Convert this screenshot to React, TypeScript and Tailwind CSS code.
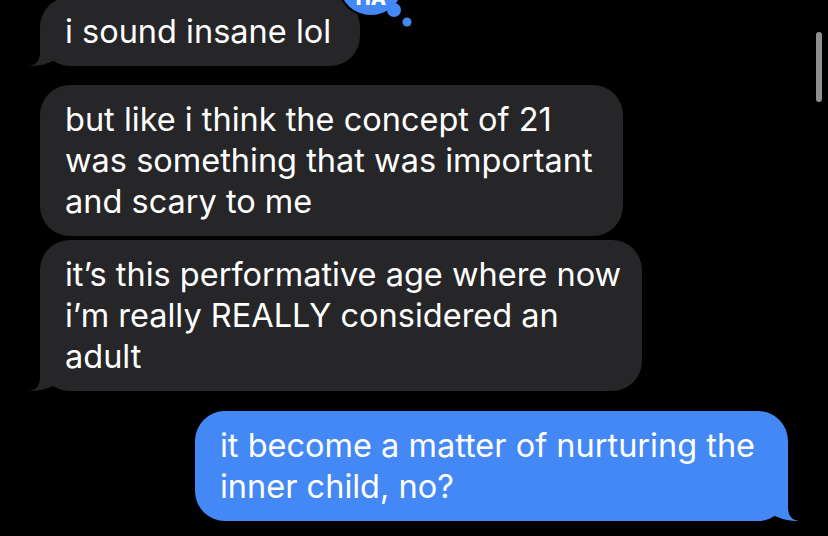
import type { ReactNode } from 'react';

type Side = 'left' | 'right';

function Tail({ side, color }: { side: Side; color: string }) {
  return (
    <svg
      width="44"
      height="34"
      viewBox="0 0 44 34"
      className={side === 'left' ? 'absolute -left-[12px] bottom-0' : 'absolute -right-[12px] bottom-0 -scale-x-100'}
    >
      <path d="M12,4 L12,20 C12,29 8,33 1,34 C10,34 19,32 25,29 L42,4 Z" fill={color} />
    </svg>
  );
}

function Bubble({
  side,
  width,
  tail,
  className,
  children,
}: {
  side: Side;
  width: string;
  tail?: boolean;
  className?: string;
  children: ReactNode;
}) {
  const color = side === 'left' ? '#262628' : '#4388f5';
  return (
    <div
      className={`relative rounded-[30px] py-[14px] pl-[25px] text-[32.5px] leading-[41px] text-white ${width} ${
        side === 'left' ? 'ml-[40px] self-start bg-[#262628]' : 'mr-[40px] self-end bg-[#4388f5]'
      } ${className ?? ''}`}
    >
      {tail && <Tail side={side} color={color} />}
      <p className="relative whitespace-nowrap">{children}</p>
    </div>
  );
}

// the "HA" tapback cloud, only its lower edge shows at the top of the screen
function Tapback() {
  return (
    <svg width="80" height="30" viewBox="0 0 80 30" className="absolute left-[336px] top-0">
      <ellipse cx="35" cy="-14" rx="33" ry="31" fill="#000" />
      <circle cx="58" cy="10" r="9" fill="#000" />
      <ellipse cx="35" cy="-14" rx="31" ry="29" fill="#4388f5" />
      <circle cx="58" cy="10" r="7" fill="#4388f5" />
      <circle cx="71" cy="22" r="4.5" fill="#4388f5" />
      <text x="35" y="5" textAnchor="middle" fill="#fff" fontSize="20" fontWeight="800" fontFamily="Inter, sans-serif">
        HA
      </text>
    </svg>
  );
}

export default function App() {
  return (
    <div className="relative h-[536px] w-[828px] overflow-hidden bg-black font-['Inter',sans-serif]">
      <div className="flex flex-col">
        <Bubble side="left" width="w-[320px]" tail className="-mt-[3px]">
          i sound insane lol
        </Bubble>
        <Bubble side="left" width="w-[583px]" className="mt-[19px]">
          but like i think the concept of 21
          <br />
          was something that was important
          <br />
          and scary to me
        </Bubble>
        <Bubble side="left" width="w-[602px]" tail className="mt-[4px]">
          it’s this performative age where now
          <br />
          i’m really REALLY considered an
          <br />
          adult
        </Bubble>
        <Bubble side="right" width="w-[593px]" tail className="mt-[20px]">
          it become a matter of nurturing the
          <br />
          inner child, no?
        </Bubble>
      </div>

      <Tapback />

      <div className="absolute left-[816px] top-[32px] h-[70px] w-[6px] rounded-full bg-[#8e8e8e]" />
    </div>
  );
}
